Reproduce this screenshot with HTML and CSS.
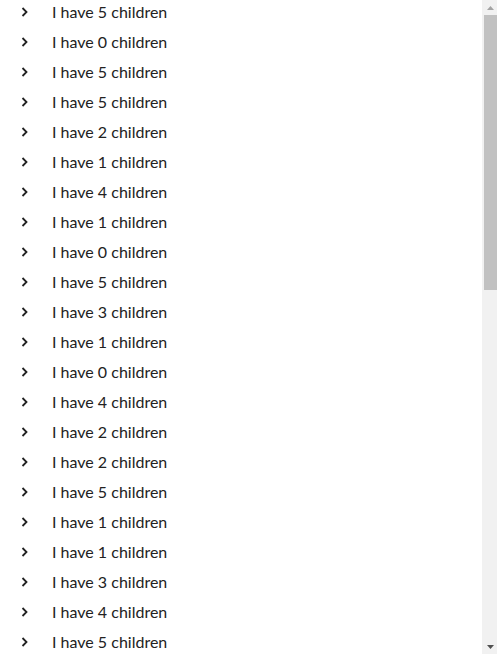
FILE: index.html
```html
<!DOCTYPE html>
<html>
<head>
<meta charset="utf-8">
<link rel="stylesheet" href="styles.css">
</head>
<body>
<div class="frame">
<ul class="tree">
<li class="row"><svg class="chev" viewBox="0 0 10 10"><polyline points="2.5,1 6.5,5 2.5,9"/></svg><span class="label">I have 5 children</span></li>
<li class="row"><svg class="chev" viewBox="0 0 10 10"><polyline points="2.5,1 6.5,5 2.5,9"/></svg><span class="label">I have 0 children</span></li>
<li class="row"><svg class="chev" viewBox="0 0 10 10"><polyline points="2.5,1 6.5,5 2.5,9"/></svg><span class="label">I have 5 children</span></li>
<li class="row"><svg class="chev" viewBox="0 0 10 10"><polyline points="2.5,1 6.5,5 2.5,9"/></svg><span class="label">I have 5 children</span></li>
<li class="row"><svg class="chev" viewBox="0 0 10 10"><polyline points="2.5,1 6.5,5 2.5,9"/></svg><span class="label">I have 2 children</span></li>
<li class="row"><svg class="chev" viewBox="0 0 10 10"><polyline points="2.5,1 6.5,5 2.5,9"/></svg><span class="label">I have 1 children</span></li>
<li class="row"><svg class="chev" viewBox="0 0 10 10"><polyline points="2.5,1 6.5,5 2.5,9"/></svg><span class="label">I have 4 children</span></li>
<li class="row"><svg class="chev" viewBox="0 0 10 10"><polyline points="2.5,1 6.5,5 2.5,9"/></svg><span class="label">I have 1 children</span></li>
<li class="row"><svg class="chev" viewBox="0 0 10 10"><polyline points="2.5,1 6.5,5 2.5,9"/></svg><span class="label">I have 0 children</span></li>
<li class="row"><svg class="chev" viewBox="0 0 10 10"><polyline points="2.5,1 6.5,5 2.5,9"/></svg><span class="label">I have 5 children</span></li>
<li class="row"><svg class="chev" viewBox="0 0 10 10"><polyline points="2.5,1 6.5,5 2.5,9"/></svg><span class="label">I have 3 children</span></li>
<li class="row"><svg class="chev" viewBox="0 0 10 10"><polyline points="2.5,1 6.5,5 2.5,9"/></svg><span class="label">I have 1 children</span></li>
<li class="row"><svg class="chev" viewBox="0 0 10 10"><polyline points="2.5,1 6.5,5 2.5,9"/></svg><span class="label">I have 0 children</span></li>
<li class="row"><svg class="chev" viewBox="0 0 10 10"><polyline points="2.5,1 6.5,5 2.5,9"/></svg><span class="label">I have 4 children</span></li>
<li class="row"><svg class="chev" viewBox="0 0 10 10"><polyline points="2.5,1 6.5,5 2.5,9"/></svg><span class="label">I have 2 children</span></li>
<li class="row"><svg class="chev" viewBox="0 0 10 10"><polyline points="2.5,1 6.5,5 2.5,9"/></svg><span class="label">I have 2 children</span></li>
<li class="row"><svg class="chev" viewBox="0 0 10 10"><polyline points="2.5,1 6.5,5 2.5,9"/></svg><span class="label">I have 5 children</span></li>
<li class="row"><svg class="chev" viewBox="0 0 10 10"><polyline points="2.5,1 6.5,5 2.5,9"/></svg><span class="label">I have 1 children</span></li>
<li class="row"><svg class="chev" viewBox="0 0 10 10"><polyline points="2.5,1 6.5,5 2.5,9"/></svg><span class="label">I have 1 children</span></li>
<li class="row"><svg class="chev" viewBox="0 0 10 10"><polyline points="2.5,1 6.5,5 2.5,9"/></svg><span class="label">I have 3 children</span></li>
<li class="row"><svg class="chev" viewBox="0 0 10 10"><polyline points="2.5,1 6.5,5 2.5,9"/></svg><span class="label">I have 4 children</span></li>
<li class="row"><svg class="chev" viewBox="0 0 10 10"><polyline points="2.5,1 6.5,5 2.5,9"/></svg><span class="label">I have 5 children</span></li>
</ul>
<div class="scrollbar">
<div class="sb-btn"><svg class="sb-arrow" viewBox="0 0 7 4"><polygon class="up" points="3.5,0 7,4 0,4"/></svg></div>
<div class="sb-track"><div class="sb-thumb"></div></div>
<div class="sb-btn"><svg class="sb-arrow" viewBox="0 0 7 4"><polygon class="down" points="0,0 7,0 3.5,4"/></svg></div>
</div>
</div>
</body>
</html>
```
FILE: styles.css
```css
html, body {
  margin: 0;
  padding: 0;
  height: 100%;
  overflow: hidden;
  background: #ffffff;
}
body {
  font-family: Lato, "Noto Sans", sans-serif;
  font-size: 16px;
  color: #222222;
}
.frame {
  display: flex;
  height: 100%;
}
.tree {
  flex: 1;
  list-style: none;
  margin: 0;
  padding: 0;
  overflow: hidden;
}
.row {
  display: flex;
  align-items: flex-start;
  height: 30px;
  padding-top: 2px;
  box-sizing: border-box;
}
.chev {
  width: 10px;
  height: 10px;
  margin: 5px 0 0 20px;
  fill: none;
  stroke: #222222;
  stroke-width: 1.8;
  flex-shrink: 0;
}
.label {
  margin-left: 22px;
  line-height: 20px;
  white-space: nowrap;
}
.scrollbar {
  width: 15px;
  flex-shrink: 0;
  display: flex;
  flex-direction: column;
  background: #f1f1f1;
}
.sb-btn {
  height: 15px;
  display: flex;
  align-items: center;
  justify-content: center;
  flex-shrink: 0;
}
.sb-arrow {
  width: 7px;
  height: 4px;
  margin-left: 1px;
}
.up {
  fill: #a3a3a3;
}
.down {
  fill: #505050;
}
.sb-track {
  flex: 1;
  display: flex;
  flex-direction: column;
}
.sb-thumb {
  height: 275px;
  margin-left: 2px;
  background: #c1c1c1;
}
```
